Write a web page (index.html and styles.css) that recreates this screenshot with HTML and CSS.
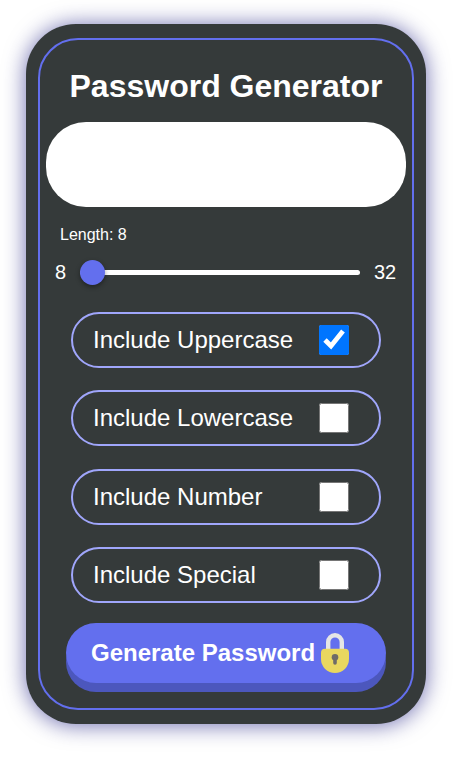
FILE: index.html
```html
<!DOCTYPE html>
<html lang="en">
<head>
<meta charset="utf-8">
<title>Password Generator</title>
<link rel="stylesheet" href="styles.css">
</head>
<body>
<main class="card">
  <div class="panel">
    <h1 class="title">Password Generator</h1>
    <div class="display"></div>
    <p class="length">Length: 8</p>
    <div class="slider">
      <span class="min">8</span>
      <input class="range" type="range" min="8" max="32" value="8">
      <span class="max">32</span>
    </div>
    <div class="options">
      <label class="option">Include Uppercase<input class="check" type="checkbox" checked></label>
      <label class="option">Include Lowercase<input class="check" type="checkbox"></label>
      <label class="option">Include Number<input class="check" type="checkbox"></label>
      <label class="option">Include Special<input class="check" type="checkbox"></label>
    </div>
    <button class="generate" type="button">Generate Password
      <svg class="lock" viewBox="0 0 28 40">
        <path d="M7.2 18V9a6.8 6.8 0 0 1 13.6 0v9" fill="none" stroke="#e5e5e5" stroke-width="4.4"/>
        <path d="M4 15.7H24Q28 15.7 28 19.7V26a14 14 0 0 1-28 0V19.7Q0 15.7 4 15.7Z" fill="#e9d75f"/>
        <circle cx="14" cy="24.2" r="3.3" fill="#6e6b68"/>
        <path d="M14 25v5" stroke="#6e6b68" stroke-width="3.6" stroke-linecap="round"/>
      </svg>
    </button>
  </div>
</main>
</body>
</html>
```
FILE: styles.css
```css
* {
  box-sizing: border-box;
}

body {
  margin: 0;
  padding: 24px 42px 0 26px;
  height: 780px;
  background: #fff;
  font-family: "Liberation Sans", Arial, sans-serif;
  color: #fff;
}

.card {
  width: 400px;
  height: 700px;
  padding: 14px 12px;
  border-radius: 50px;
  background: #353a3a;
  box-shadow: 0 1px 22px rgba(0, 0, 115, 0.58);
}

.panel {
  display: flex;
  flex-direction: column;
  height: 672px;
  padding: 28px 6px 0;
  border: 2px solid #636fee;
  border-radius: 40px;
}

.title {
  margin: 0 0 17px;
  font-size: 32px;
  line-height: 37px;
  text-align: center;
}

.display {
  flex: none;
  height: 85px;
  border-radius: 40px;
  background: #fff;
}

.length {
  margin: 19px 0 0 14px;
  font-size: 16px;
  line-height: 18px;
}

.slider {
  display: flex;
  align-items: center;
  height: 23px;
  margin: 17px 9px 0;
  font-size: 20px;
}

.min {
  width: 25px;
}

.range {
  flex: none;
  width: 280px;
  height: 5px;
  margin: 0 14px 0 0;
  border-radius: 5px;
  background: #fff;
  appearance: none;
}

.range::-webkit-slider-thumb {
  width: 25px;
  height: 25px;
  border-radius: 50%;
  background: #636fee;
  box-shadow: 0 2px 5px rgba(0, 0, 0, 0.4);
  appearance: none;
}

.options {
  display: grid;
  gap: 22.33px;
  margin: 28px 25px 0;
}

.option {
  display: flex;
  align-items: center;
  justify-content: space-between;
  height: 56px;
  padding: 0 30px 0 20px;
  border: 2px solid #a0a6fb;
  border-radius: 30px;
  font-size: 24px;
}

.check {
  width: 30px;
  height: 30px;
  margin: 0;
}

.generate {
  display: flex;
  align-items: center;
  justify-content: space-between;
  flex: none;
  width: 320px;
  height: 60px;
  margin: 20px 20px 0;
  padding: 0 37px 0 25px;
  border: 0;
  border-radius: 30px;
  background: #636fee;
  box-shadow: 0 9px 0 #4c57bd;
  color: #fff;
  font: bold 24px "Liberation Sans", Arial, sans-serif;
  white-space: nowrap;
}

.lock {
  flex: none;
  width: 28px;
  height: 40px;
}
```
